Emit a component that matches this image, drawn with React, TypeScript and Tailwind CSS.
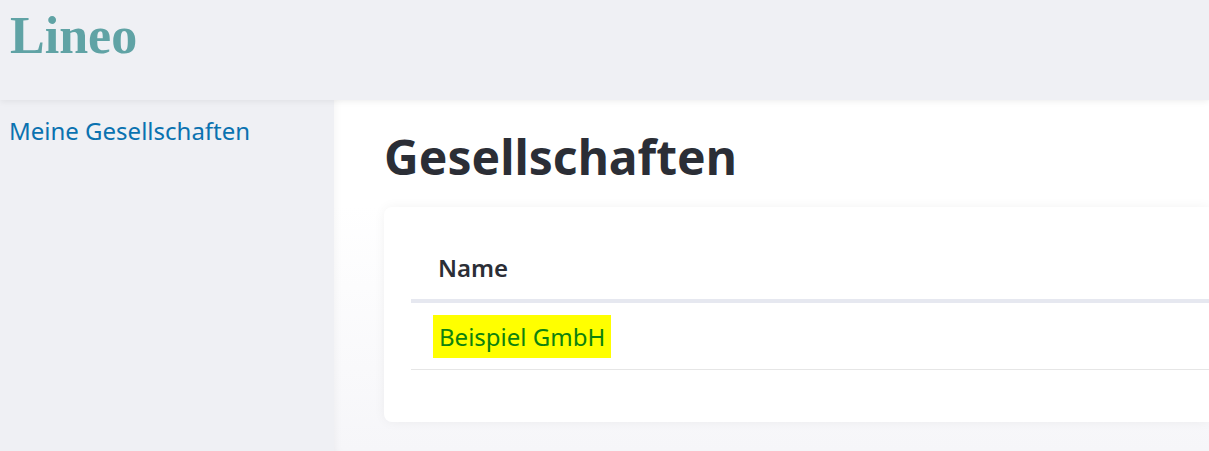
export default function App() {
  return (
    <div className="h-[451px] w-[1209px] overflow-hidden bg-[#eff0f4] font-['Noto_Sans',sans-serif]">
      {/* Top bar */}
      <header className="relative z-10 flex h-[100px] items-start bg-[#eff0f4] px-[10px] pt-[5px] shadow-[0_2px_6px_rgba(0,0,0,0.06)]">
        <span className="font-['Liberation_Serif',serif] text-[52px] font-bold leading-[62px] text-[#60a3a5]">Lineo</span>
      </header>

      <div className="flex h-[351px]">
        {/* Sidebar */}
        <aside className="w-[334px] shrink-0 bg-[#eff0f4] px-[9px] pt-[13px]">
          <a href="#" className="text-[24px] leading-[36px] text-[#0a72b0]">Meine Gesellschaften</a>
        </aside>

        {/* Main content */}
        <main className="relative flex-1 bg-gradient-to-b from-white from-30% to-[#f6f6f9] pl-[50px] pt-[21px] shadow-[inset_6px_0_10px_-6px_rgba(0,0,0,0.06)]">
          <h1 className="text-[48px] font-bold leading-[72px] text-[#2b2e36]">Gesellschaften</h1>
          <div className="mt-[14px] rounded-l-[8px] bg-white pb-[52px] pl-[27px] pt-[34px] shadow-[0_0_12px_rgba(0,0,0,0.05)]">
            <table className="w-full border-collapse">
              <thead>
                <tr className="border-b-[4px] border-[#e6e8f0]">
                  <th className="pb-[13px] pl-[27px] pt-[9px] text-left text-[24px] font-semibold leading-[36px] text-[#2b2e36]">Name</th>
                </tr>
              </thead>
              <tbody>
                <tr className="border-b border-[#e6e6e6]">
                  <td className="pb-[11px] pl-[22px] pt-[12px]">
                    <span className="inline-block bg-[#ffff00] px-[6px] py-[5px] text-[24px] leading-[33px] text-[#0e820e]">Beispiel GmbH</span>
                  </td>
                </tr>
              </tbody>
            </table>
          </div>
        </main>
      </div>
    </div>
  );
}
